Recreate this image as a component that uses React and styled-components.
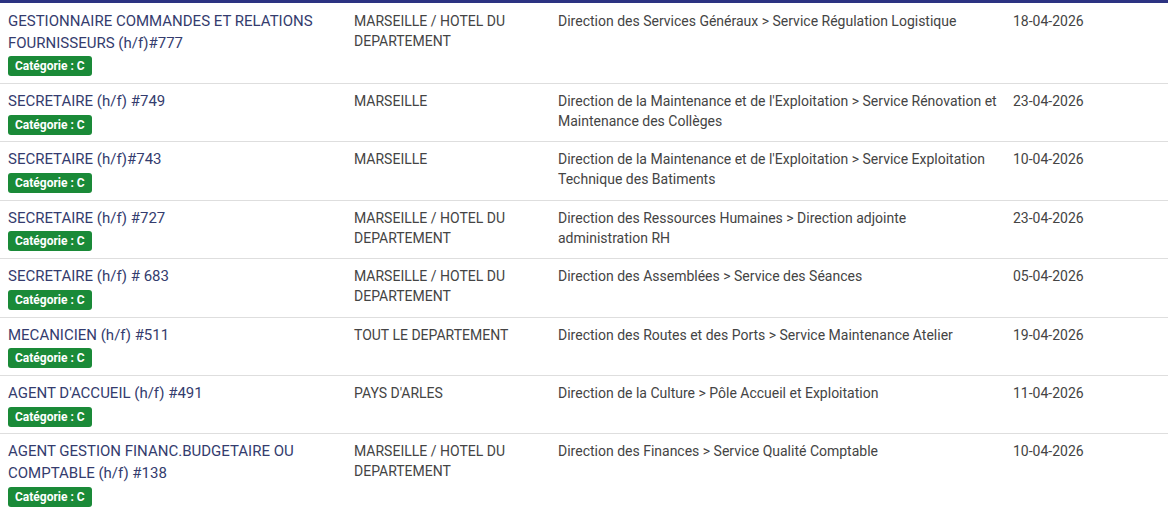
import React from 'react'
import styled, { createGlobalStyle } from 'styled-components'

const GlobalStyle = createGlobalStyle`
  body {
    margin: 0;
    background: #fff;
    font-family: Roboto, "Liberation Sans", sans-serif;
  }
`

const offers = [
  {title: 'GESTIONNAIRE COMMANDES ET RELATIONS FOURNISSEURS (h/f)#777', place: 'MARSEILLE / HOTEL DU DEPARTEMENT', service: 'Direction des Services Généraux > Service Régulation Logistique', date: '18-04-2026'},
  {title: 'SECRETAIRE (h/f) #749', place: 'MARSEILLE', service: "Direction de la Maintenance et de l'Exploitation > Service Rénovation et Maintenance des Collèges", date: '23-04-2026'},
  {title: 'SECRETAIRE (h/f)#743', place: 'MARSEILLE', service: "Direction de la Maintenance et de l'Exploitation > Service Exploitation Technique des Batiments", date: '10-04-2026'},
  {title: 'SECRETAIRE (h/f) #727', place: 'MARSEILLE / HOTEL DU DEPARTEMENT', service: 'Direction des Ressources Humaines > Direction adjointe administration RH', date: '23-04-2026'},
  {title: 'SECRETAIRE (h/f) # 683', place: 'MARSEILLE / HOTEL DU DEPARTEMENT', service: 'Direction des Assemblées > Service des Séances', date: '05-04-2026'},
  {title: 'MECANICIEN (h/f) #511', place: 'TOUT LE DEPARTEMENT', service: 'Direction des Routes et des Ports > Service Maintenance Atelier', date: '19-04-2026'},
  {title: "AGENT D'ACCUEIL (h/f) #491", place: "PAYS D'ARLES", service: 'Direction de la Culture > Pôle Accueil et Exploitation', date: '11-04-2026'},
  {title: 'AGENT GESTION FINANC.BUDGETAIRE OU COMPTABLE (h/f) #138', place: 'MARSEILLE / HOTEL DU DEPARTEMENT', service: 'Direction des Finances > Service Qualité Comptable', date: '10-04-2026'}
]

const List = styled.div`
  border-top: 3px solid #2c3382;
  padding-top: 1px;
  width: 1168px;
`

const Row = styled.div`
  display: grid;
  grid-template-columns: 346px 204px 455px 1fr;
  border-bottom: 1px solid #dedede;
`

const Cell = styled.div`
  padding: 7px 8px 6.8px;
  font-size: 14px;
  line-height: 20px;
  color: #444;
`

const Title = styled.a`
  display: block;
  font-size: 15px;
  line-height: 21.6px;
  color: #343c6e;
  text-decoration: none;
`

const Badge = styled.span`
  display: inline-block;
  margin-top: 2px;
  height: 20px;
  line-height: 20px;
  padding: 0 7px;
  border-radius: 3px;
  background: #1a8a38;
  color: #fff;
  font-size: 12px;
  font-weight: 700;
`

export default function App() {
  return (
    <>
      <GlobalStyle />
      <List>
        {offers.map((o, i) =>
          <Row key={i}>
            <Cell>
              <Title href="#">{o.title}</Title>
              <Badge>Catégorie : C</Badge>
            </Cell>
            <Cell>{o.place}</Cell>
            <Cell>{o.service}</Cell>
            <Cell>{o.date}</Cell>
          </Row>
        )}
      </List>
    </>
  )
}
